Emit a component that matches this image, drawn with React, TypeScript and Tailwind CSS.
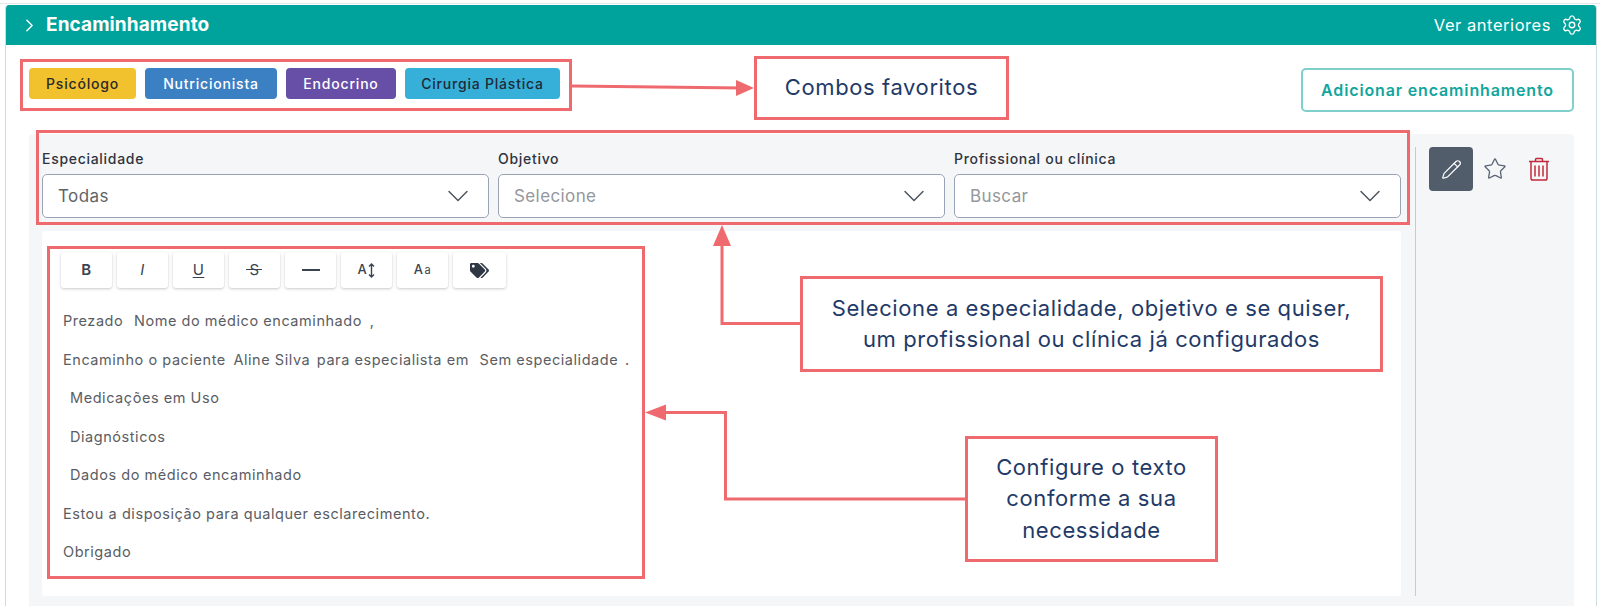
import { ChevronDown, ChevronRight, Pencil, Settings, Star } from 'lucide-react';
import { FaTags } from 'react-icons/fa';

const chips = [
  { label: 'Psicólogo', cls: 'w-[107px] bg-[#f2c12e] text-[#2a2a2a]' },
  { label: 'Nutricionista', cls: 'w-[132px] bg-[#3c80c4] text-white' },
  { label: 'Endocrino', cls: 'w-[110px] bg-[#674ea7] text-white' },
  { label: 'Cirurgia Plástica', cls: 'w-[155px] bg-[#37b0d9] text-[#1f2a36]' },
];

const selects = [
  { label: 'Especialidade', value: 'Todas', cls: 'text-[#5f6368]' },
  { label: 'Objetivo', value: 'Selecione', cls: 'text-[#94979c]' },
  { label: 'Profissional ou clínica', value: 'Buscar', cls: 'text-[#94979c]' },
];

function ToolButton({ children, wide }: { children: React.ReactNode; wide?: boolean }) {
  return (
    <div className={`flex h-[36px] ${wide ? 'w-[53px]' : 'w-[51px]'} items-center justify-center rounded-[3px] bg-white text-[#3a4350] shadow-[0_1px_3px_rgba(0,0,0,0.22)]`}>
      {children}
    </div>
  );
}

function Toolbar() {
  return (
    <div className="flex gap-[5px]">
      <ToolButton><span className="text-[15px] font-semibold">B</span></ToolButton>
      <ToolButton><span className="text-[15px] italic">I</span></ToolButton>
      <ToolButton><span className="text-[15px] underline underline-offset-2">U</span></ToolButton>
      <ToolButton>
        <span className="relative text-[15px]">
          S
          <span className="absolute left-[-3px] top-[10px] h-[1px] w-[16px] bg-[#3a4350]" />
        </span>
      </ToolButton>
      <ToolButton><span className="h-[2.5px] w-[18px] bg-[#3a4350]" /></ToolButton>
      <ToolButton>
        <span className="text-[13px] font-medium">A</span>
        <svg width="7" height="15" viewBox="0 0 7 15" fill="none" stroke="currentColor" strokeWidth="1.4" className="ml-[1px]">
          <path d="M3.5 1v13M1 3.5 3.5 1 6 3.5M1 11.5 3.5 14 6 11.5" />
        </svg>
      </ToolButton>
      <ToolButton>
        <span className="text-[13px] font-medium">A</span>
        <span className="ml-[1px] text-[11px]">a</span>
      </ToolButton>
      <ToolButton wide><FaTags className="h-[17px] w-[19px] text-[#2f3744]" /></ToolButton>
    </div>
  );
}

function TrashIcon() {
  return (
    <svg width="22" height="24" viewBox="0 0 22 24" fill="none" stroke="#c2283a" strokeWidth="1.5">
      <path d="M1 4.5h20M7.5 4.5V2.6c0-.6.5-1.1 1.1-1.1h4.8c.6 0 1.1.5 1.1 1.1v1.9" />
      <path d="M3 4.5v16.7c0 1 .8 1.8 1.8 1.8h12.4c1 0 1.8-.8 1.8-1.8V4.5" />
      <path d="M7 8.5v11M11 8.5v11M15 8.5v11" />
    </svg>
  );
}

function Callout({ cls, children }: { cls: string; children: React.ReactNode }) {
  return (
    <div className={`absolute flex items-center justify-center border-[3px] border-[#ee6a6e] bg-white text-center text-[22px] leading-[31.5px] tracking-[0.6px] text-[#1f3a68] ${cls}`}>
      <div>{children}</div>
    </div>
  );
}

export default function App() {
  return (
    <div className="relative h-[606px] w-[1600px] overflow-hidden bg-white font-['Inter',sans-serif]">
      <div className="h-[5px] pt-[3px]">
        <div className="h-[1px] bg-[#e4e6ea]" />
      </div>

      <div className="ml-[5px] mr-[3px] h-[601px] overflow-hidden rounded-t-[4px] border-x border-[#c9dedd]">
        <header className="flex h-[40px] items-center justify-between bg-[#00a39b] pl-[13px] pr-[13px] text-white">
          <div className="flex items-center gap-[6px]">
            <ChevronRight size={21} strokeWidth={1.6} />
            <span className="text-[19px] font-bold tracking-[0.1px]">Encaminhamento</span>
          </div>
          <div className="flex items-center gap-[10px]">
            <span className="text-[16.5px] tracking-[0.55px]">Ver anteriores</span>
            <Settings size={22} strokeWidth={1.5} />
          </div>
        </header>

        <div className="flex items-start justify-between pl-[23px] pr-[22px] pt-[23px]">
          <div className="flex gap-[9px]">
            {chips.map((c) => (
              <div key={c.label} className={`flex h-[31px] items-center justify-center rounded-[4px] text-[14px] font-medium tracking-[0.8px] ${c.cls}`}>
                {c.label}
              </div>
            ))}
          </div>
          <button className="h-[44px] w-[273px] rounded-[5px] border-2 border-[#7fd0cb] bg-white text-[16px] font-semibold tracking-[0.85px] text-[#12a59d]">
            Adicionar encaminhamento
          </button>
        </div>

        <div className="ml-[23px] mr-[22px] mt-[22px] flex h-[472px] rounded-t-[4px] bg-[#f5f6f8] pl-[13px]">
          <div className="w-[1360px] pr-[1px]">
            <div className="grid grid-cols-3 gap-[9px] pt-[15px]">
              {selects.map((s) => (
                <div key={s.label}>
                  <div className="mb-[6px] text-[14px] font-medium leading-[19px] tracking-[0.7px] text-[#2e3440]">{s.label}</div>
                  <div className={`flex h-[44px] items-center justify-between rounded-[5px] border border-[#9aa3b5] bg-white pl-[15px] pr-[12px] text-[17px] tracking-[0.4px] ${s.cls}`}>
                    <span className="translate-y-[1px]">{s.value}</span>
                    <ChevronDown size={36} strokeWidth={1} className="text-[#4f5661]" />
                  </div>
                </div>
              ))}
            </div>

            <div className="mt-[13px] h-[365px] rounded-[3px] bg-white pl-[19px] pt-[21px] text-[14.5px] tracking-[0.55px] text-[#5a5d63]">
              <Toolbar />
              <div className="mt-[23px] space-y-[18.5px] pl-[2px] leading-[20px]">
                <p>Prezado <span className="ml-[6px]">Nome do médico encaminhado</span> <span className="ml-[3px]">,</span></p>
                <p>
                  Encaminho o paciente <span className="ml-[3px]">Aline Silva</span> <span className="ml-[2px]">para especialista em</span> <span className="ml-[6px]">Sem especialidade</span> <span className="ml-[2px]">.</span>
                </p>
                <p className="pl-[7px]">Medicações em Uso</p>
                <p className="pl-[7px]">Diagnósticos</p>
                <p className="pl-[7px]">Dados do médico encaminhado</p>
                <p>Estou a disposição para qualquer esclarecimento.</p>
                <p>Obrigado</p>
              </div>
            </div>
          </div>

          <div className="ml-[13px] mt-[13px] flex h-[449px] border-l border-[#c5cad3] pl-[13px]">
            <div className="flex h-[44px] w-[44px] items-center justify-center rounded-[4px] bg-[#525d6c] text-white">
              <Pencil size={21} strokeWidth={1.4} />
            </div>
            <div className="flex h-[44px] w-[44px] items-center justify-center text-[#5a6472]">
              <Star size={24} strokeWidth={1.3} />
            </div>
            <div className="flex h-[44px] w-[44px] items-center justify-center">
              <TrashIcon />
            </div>
          </div>
        </div>
      </div>

      {/* anotacoes por cima da tela */}
      <div className="absolute left-[20px] top-[59px] h-[52px] w-[552px] border-[3px] border-[#ee6a6e]" />
      <div className="absolute left-[36px] top-[130px] h-[95px] w-[1374px] border-[3px] border-[#ee6a6e]" />
      <div className="absolute left-[47px] top-[246px] h-[333px] w-[598px] border-[3px] border-[#ee6a6e]" />

      <svg className="absolute left-0 top-0 h-[606px] w-[1600px]" viewBox="0 0 1600 606" fill="none" stroke="#ee6a6e" strokeWidth="3">
        <path d="M572 86 742 88" />
        <path d="M754 88 736 80v16z" fill="#ee6a6e" stroke="none" />
        <path d="M800 323.5H722V240" />
        <path d="M722 225l-9 21h18z" fill="#ee6a6e" stroke="none" />
        <path d="M965 499H725.500V412.500H660" />
        <path d="M645 412.500l21-8v16z" fill="#ee6a6e" stroke="none" />
      </svg>

      <Callout cls="left-[754px] top-[56px] h-[64px] w-[255px]">Combos favoritos</Callout>
      <Callout cls="left-[800px] top-[276px] h-[96px] w-[583px]">
        Selecione a especialidade, objetivo e se quiser,<br />um profissional ou clínica já configurados
      </Callout>
      <Callout cls="left-[965px] top-[436px] h-[126px] w-[253px]">
        Configure o texto<br />conforme a sua<br />necessidade
      </Callout>
    </div>
  );
}
